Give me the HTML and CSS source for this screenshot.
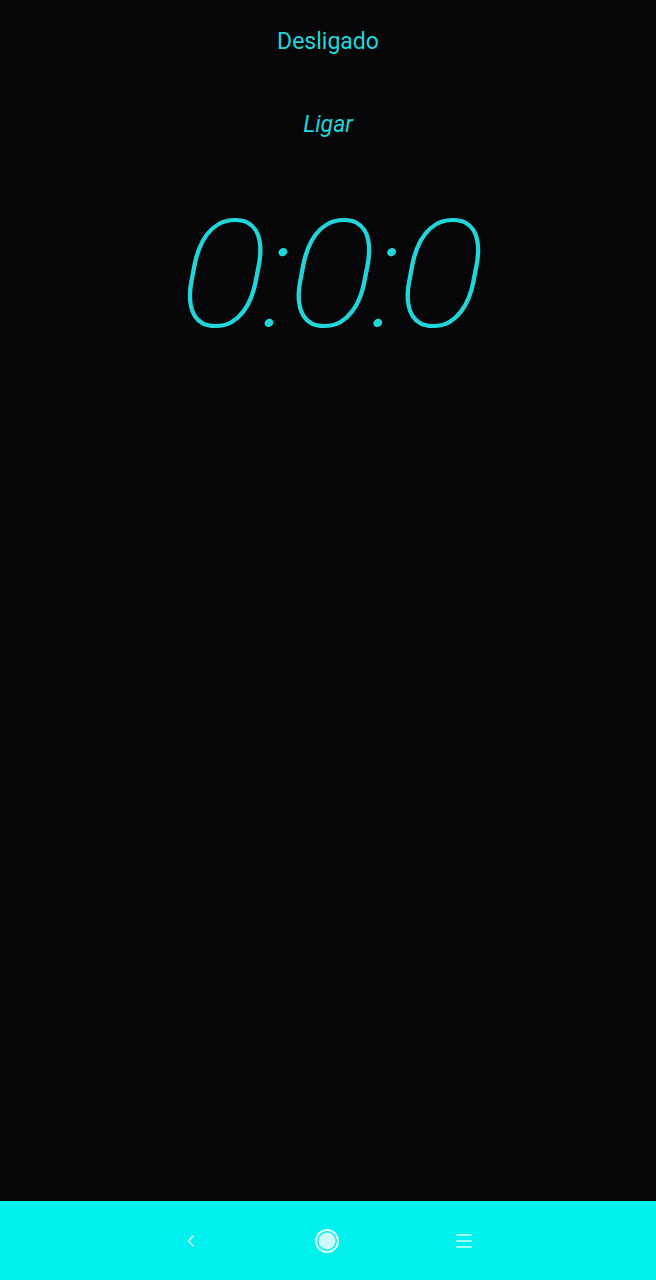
FILE: index.html
```html
<!DOCTYPE html>
<html lang="pt">
<head>
<meta charset="utf-8">
<link rel="stylesheet" href="styles.css">
</head>
<body>
<div class="screen">
  <main class="content">
    <div class="status">Desligado</div>
    <div class="toggle">Ligar</div>
    <div class="timer">0:0:0</div>
  </main>
  <nav class="navbar">
    <svg class="nav-back" width="12" height="16" viewBox="0 0 12 16"><path d="M8.5 2.5 L3.5 8 L8.5 13.5" fill="none" stroke="#d6fbfb" stroke-width="1.5"/></svg>
    <svg class="nav-home" width="28" height="28" viewBox="0 0 28 28"><circle cx="14" cy="14" r="11" fill="none" stroke="#dcfdfd" stroke-width="2"/><circle cx="14" cy="14" r="8.5" fill="#cdfbfb"/></svg>
    <svg class="nav-menu" width="18" height="16" viewBox="0 0 18 16"><path d="M1 2 H17 M1 8 H17 M1 14 H17" stroke="#d6fbfb" stroke-width="1.4"/></svg>
  </nav>
</div>
</body>
</html>
```
FILE: styles.css
```css
html, body {
  margin: 0;
  padding: 0;
  background: #070709;
}
.screen {
  width: 656px;
  height: 1280px;
  display: flex;
  flex-direction: column;
  background: #070709;
  font-family: Roboto, "Noto Sans", sans-serif;
  color: #22d5d9;
}
.content {
  flex: 1;
  display: flex;
  flex-direction: column;
  align-items: center;
}
.status {
  margin-top: 27px;
  font-size: 23px;
  line-height: 30px;
}
.toggle {
  margin-top: 53px;
  font-size: 23px;
  line-height: 30px;
  font-style: italic;
}
.timer {
  margin-top: 58px;
  margin-left: 3px;
  font-size: 151px;
  font-weight: 150;
  font-style: italic;
  line-height: 156px;
  letter-spacing: -4px;
  transform: scaleX(1.1);
}
.navbar {
  height: 79px;
  background: #00f0ee;
  display: flex;
  align-items: center;
  justify-content: center;
}
.nav-back { margin-left: 2px; margin-right: 116px; }
.nav-home { margin-right: 114px; }
```
